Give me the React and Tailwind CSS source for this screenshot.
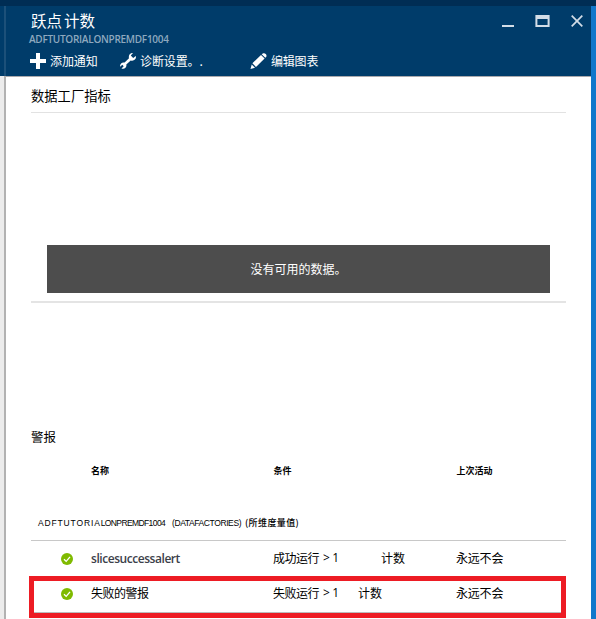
const cjk = "font-['Noto_Sans_CJK_SC',sans-serif]";

function CheckIcon() {
  return (
    <svg width="12" height="12" viewBox="0 0 12 12" className="mt-px shrink-0">
      <circle cx="6" cy="6" r="6" fill="#7fba00" />
      <path d="M3 6.2 5.2 8.4 9 3.8" fill="none" stroke="#fff" strokeWidth="1.3" />
    </svg>
  );
}

function WindowButtons() {
  return (
    <div className="ml-auto mr-[8px] mt-[9px] flex h-3 text-[#d3dde7]">
      <svg width="12" height="12" viewBox="0 0 12 12" className="mr-[21px]">
        <path d="M0 10h12v2H0z" fill="currentColor" />
      </svg>
      <svg width="15" height="12" viewBox="0 0 15 12" className="mr-[21px]">
        <path fillRule="evenodd" d="M.4 0h14.2v12H.4zM2.4 4v6h10.2V4z" fill="currentColor" />
      </svg>
      <svg width="12" height="12" viewBox="0 0 12 12">
        <path d="M.7.7 11.3 11.3M11.3.7.7 11.3" stroke="currentColor" strokeWidth="1.7" />
      </svg>
    </div>
  );
}

function Toolbar() {
  return (
    <div className="ml-[24px] mt-[6px] flex h-[18px] items-center text-[12px] leading-[18px] text-white">
      <svg width="16" height="16" viewBox="0 0 16 16" className="mr-[4px] shrink-0">
        <path d="M6 0h4v6h6v4h-6v6H6v-6H0V6h6z" fill="#fff" />
      </svg>
      <span className="w-[70px] whitespace-nowrap tracking-[-0.1px]">添加通知</span>
      <svg width="16" height="16" viewBox="0 0 16 16" className="mr-[4px] shrink-0">
        <path
          d="M13 0 10.8 2.5 13.2 5 15.8 3C16.7 6 13.8 8.6 10.7 7.4L6.3 11.6C7 14.2 4.5 16.5 1.5 15.4L3.7 13.3 2.3 11.8.1 13.7C-.3 11 2 8.9 4.6 9.6L9 5.2C8.1 2.2 10.4-.4 13 0Z"
          fill="#fff"
        />
      </svg>
      <span className="w-[110px] whitespace-nowrap tracking-[-0.1px]">诊断设置。.</span>
      <svg width="17" height="16" viewBox="0 0 17 16" className="mr-[4px] shrink-0">
        <path
          d="M.5 16 1.7 11.5 5 14.8ZM2.4 10.2 11 2 14.6 5.4 6 14ZM11.7 1.3 12.8.5C14.9-.8 17.6 1.9 16.1 3.9L15.3 4.7Z"
          fill="#fff"
        />
      </svg>
      <span className="whitespace-nowrap tracking-[-0.2px]">编辑图表</span>
    </div>
  );
}

function AlertRow({ name, latin, condition, gap }) {
  return (
    <div className="flex h-[18px] items-center text-[12px] leading-[18px]">
      <div className="flex w-[60px] pl-[30px]">
        <CheckIcon />
      </div>
      <div
        className={
          latin
            ? "w-[182px] pt-px font-['Open_Sans',sans-serif] text-[12px] font-semibold tracking-[-0.45px] text-[#3b4049]"
            : "w-[182px] tracking-[-0.5px]"
        }
      >
        {name}
      </div>
      <div className="flex w-[183px] whitespace-nowrap">
        <span className="tracking-[-0.5px]">{condition}</span>
        <span className="ml-[4px] w-[15px] font-['Open_Sans',sans-serif] tracking-[-0.4px]">&gt; 1</span>
        <span className={gap}>计数</span>
      </div>
      <div className="whitespace-nowrap tracking-[-0.2px]">永远不会</div>
    </div>
  );
}

export default function App() {
  return (
    <div className={`flex h-[619px] w-[596px] flex-col overflow-hidden bg-white text-black ${cjk}`}>
      <div className="h-[6px] shrink-0 bg-[#002d54]" />
      <div className="flex min-h-0 flex-1">
        <div className="flex w-[6px] shrink-0 flex-col">
          <div className="h-[70px] border-r-2 border-[#1c5079] bg-[#003c6a]" />
          <div className="flex-1 border-r-2 border-[#b2b2b2] bg-[#ececec]" />
        </div>
        <main className="flex w-[585px] shrink-0 flex-col">
          <header className="h-[71px] shrink-0 border-b border-[#aaa9ad] bg-[#003c6a]">
            <div className="flex h-[27px]">
              <h1 className="ml-[25px] mt-[2px] whitespace-nowrap text-[15.5px] leading-6 text-white">
                跃点<span className="ml-[2px]">计数</span>
              </h1>
              <WindowButtons />
            </div>
            <div className="ml-[23px] h-[13px] font-['Open_Sans',sans-serif] text-[10px] font-semibold leading-[13px] tracking-[-0.27px] text-[#8ea9bf]">
              ADFTUTORIALONPREMDF1004
            </div>
            <Toolbar />
          </header>

          <section className="ml-[25px] w-[535px]">
            <h2 className="h-[36px] border-b border-[#e2e2e2] pt-[9px] text-[13.3px] leading-[20px]">数据工厂指标</h2>
            <div className="flex h-[190px] flex-col justify-end border-b-2 border-[#e4e4e4] px-[16px] pb-[8px]">
              <div className="flex h-[48px] items-center justify-center bg-[#4d4d4d] text-[12px] text-white">
                <span>没有可用的数据。</span>
              </div>
            </div>
          </section>

          <section className="w-[585px] pt-[124px]">
            <h2 className="ml-[25px] h-[20px] text-[12.5px] leading-[20px]">警报</h2>
            <div className="ml-[25px] mt-[17px] flex h-[14px] text-[9px] font-bold leading-[14px]">
              <span className="ml-[60px] w-[182.5px]">名称</span>
              <span className="w-[183px]">条件</span>
              <span>上次活动</span>
            </div>
            <div className="ml-[25px] mt-[37px] flex h-[26px] w-[535px] whitespace-pre border-b border-[#c8c8c8] pl-[7px] text-[9px] leading-[16px]">
              <span className="w-[134px] font-['Liberation_Sans',sans-serif] text-[8.5px]">
                <span className="tracking-[0.85px]">ADFTUTORIA</span>
                <span className="tracking-[-0.6px]">LONPREMDF1004</span>
              </span>
              <span className="w-[70px] font-['Liberation_Sans',sans-serif] text-[8.5px] tracking-[-0.4px]">(DATAFACTORIES)</span>
              <span className="ml-[3px] font-medium tracking-[0.4px]">(所维度量值)</span>
            </div>
            <div className="ml-[25px] pt-[8px]">
              <AlertRow name="slicesuccessalert" latin condition="成功运行" gap="ml-[43px]" />
            </div>
            <div className="ml-[23px] mt-[9px] h-[42px] w-[537px] border-[5px] border-[#ed1c24]">
              <div className="-ml-[3px] pt-[3px]">
                <AlertRow name="失败的警报" condition="失败运行" gap="ml-[20px]" />
              </div>
              <div className="mt-[10px] h-px bg-[#bcbcbc]" />
            </div>
          </section>
        </main>
        <div className="w-[5px] shrink-0 bg-[#1177cb]" />
      </div>
    </div>
  );
}
